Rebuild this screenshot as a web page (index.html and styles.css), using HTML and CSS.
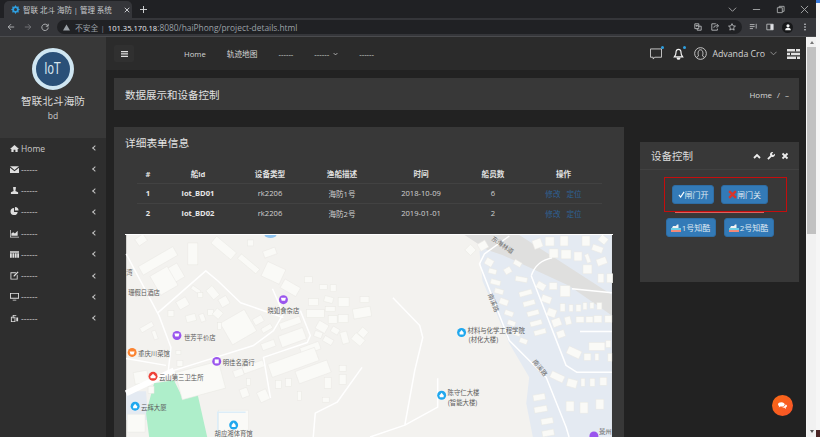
FILE: index.html
```html
<!DOCTYPE html>
<html lang="zh">
<head>
<meta charset="utf-8">
<title>智联 北斗 海防 | 管理 系统</title>
<link rel="stylesheet" href="styles.css">
</head>
<body>
<div class="window">
  <header class="browser">
    <div class="tabstrip">
      <div class="tab">
        <svg class="favicon" viewBox="0 0 12 12"><path class="fav" d="M6 0l1.6 2.2 2.8-.2-.4 2.6L12 6l-2 1.4.4 2.6-2.8-.2L6 12l-1.600-2.200-2.800.2L2 7.400 0 6l2-1.400L1.600 2l2.800.2z"/><circle class="favhole" cx="6" cy="6" r="2"/></svg>
        <span class="tabtitle">智联 北斗 海防 | 管理 系统</span>
        <svg class="tabx" viewBox="0 0 8 8"><path d="M1 1l6 6M7 1L1 7"/></svg>
      </div>
      <svg class="newtab" viewBox="0 0 9 9"><path d="M4.500 0v9M0 4.500h9"/></svg>
      <div class="winctl">
        <svg class="wi" viewBox="0 0 10 10"><path d="M1 3l4 4 4-4"/></svg>
        <svg class="wi" viewBox="0 0 10 10"><path d="M1 5h8"/></svg>
        <svg class="wi" viewBox="0 0 10 10"><path d="M1.500 3h5.500v5.500H1.500zM3.500 3V1.500H9V7H7"/></svg>
        <svg class="wi" viewBox="0 0 10 10"><path d="M1 1l8 8M9 1l-8 8"/></svg>
      </div>
    </div>
    <div class="toolbar">
      <div class="navbtns">
        <svg class="ti" viewBox="0 0 10 10"><path d="M9 5H1.500M5 1.500L1.500 5 5 8.500"/></svg>
        <svg class="ti dim" viewBox="0 0 10 10"><path d="M1 5h7.500M5 1.500L8.500 5 5 8.500"/></svg>
        <svg class="ti" viewBox="0 0 10 10"><path d="M8.500 3.500A4 4 0 1 0 9 5.500M9 1v3H6"/></svg>
      </div>
      <div class="omnibox">
        <svg class="warn" viewBox="0 0 8 8"><path d="M4 .5L8 7.500H0z"/></svg>
        <span class="insecure">不安全</span><span class="sep">|</span>
        <span class="url"><b>101.35.170.18</b>:8080/haiPhong/project-details.html</span>
        <span class="omniicons">
          <svg class="ti small" viewBox="0 0 10 10"><path d="M1 1h5v6H1zM5 4h4v5H4V7M2 3h3M3.500 3v2"/></svg>
          <svg class="ti small" viewBox="0 0 10 10"><path d="M7 1l2.500 2.500L7 6M9 3.500H6A2.500 2.500 0 0 0 3.500 6M6 1H1v8h7V7"/></svg>
          <svg class="ti small" viewBox="0 0 10 10"><path d="M5 .8l1.300 2.800 3 .3-2.300 2 .7 3L5 7.400 2.300 8.900l.7-3-2.300-2 3-.3z"/></svg>
        </span>
      </div>
      <div class="exts">
        <svg class="ti" viewBox="0 0 10 10"><path d="M1 2h6M1 4.500h6M1 7h4M9 1v6"/></svg>
        <svg class="ti" viewBox="0 0 10 10"><path d="M1 1.500h8v7H1z"/><path class="solid" d="M5.500 1.500H9v7H5.500z"/></svg>
        <span class="avatar"><svg viewBox="0 0 10 10"><circle class="solid" cx="5" cy="3.500" r="2"/><path class="solid" d="M1.500 9c0-2 1.500-3 3.500-3s3.500 1 3.500 3z"/></svg></span>
        <svg class="ti" viewBox="0 0 10 10"><circle class="solid" cx="5" cy="1.500" r="1"/><circle class="solid" cx="5" cy="5" r="1"/><circle class="solid" cx="5" cy="8.500" r="1"/></svg>
      </div>
    </div>
  </header>

  <div class="viewport">
    <div class="app">
      <aside class="sidebar">
        <div class="brand">
          <div class="logo"><span class="logotext">IoT</span></div>
          <div class="brandname">智联北斗海防</div>
          <div class="branduser">bd</div>
        </div>
        <nav class="menu">
          <a class="item"><svg class="mi" viewBox="0 0 10 10"><path d="M5 1L0 5.500h1.500V9h2.500V6.500h2V9h2.500V5.500H10z"/></svg><span>Home</span><i class="arrow"></i></a>
          <a class="item"><svg class="mi" viewBox="0 0 10 10"><path d="M0 1.500h10L5 5.500zM0 3v6h10V3L5 7z"/></svg><span>------</span><i class="arrow"></i></a>
          <a class="item"><svg class="mi" viewBox="0 0 10 10"><path d="M3.500 1h3v1.500L6 5.500l3 1.500v2H1V7l3-1.500-.5-3z"/></svg><span>------</span><i class="arrow"></i></a>
          <a class="item"><svg class="mi" viewBox="0 0 10 10"><path d="M4.500 1a4 4 0 1 0 4 4.500h-4zM5.500 0v4h4a4 4 0 0 0-4-4z"/></svg><span>------</span><i class="arrow"></i></a>
          <a class="item"><svg class="mi" viewBox="0 0 10 10"><path d="M0 1h.8v7.500H10V9.500H0zM1.500 7.500V5l2-1.500 2 1.500 3-3v5.500z"/></svg><span>------</span><i class="arrow"></i></a>
          <a class="item"><svg class="mi" viewBox="0 0 10 10"><path d="M0 1.500h10v1.500H0zM0 3.500h2v5H0zM2.700 3.500h2v5h-2zM5.400 3.500h2v5h-2zM8 3.500h2v5H8z"/></svg><span>------</span><i class="arrow"></i></a>
          <a class="item"><svg class="mi" viewBox="0 0 10 10"><path d="M1.500 1.500H7L6 2.500H1.500v6h6V5l1-1v5.500H.5v-8zM8.500 .5l1 1L5 6H4V5z"/></svg><span>------</span><i class="arrow"></i></a>
          <a class="item"><svg class="mi" viewBox="0 0 10 10"><path d="M0 1h10v6.500H0zM1 2v4.500h8V2zM3 8.500h4V9.500H3z"/></svg><span>------</span><i class="arrow"></i></a>
          <a class="item"><svg class="mi" viewBox="0 0 10 10"><path d="M3 1h4v1H4v3H3zM1 3h5v6H1zM2 4v4h3V4zM7 4h2v4H7z"/></svg><span>------</span><i class="arrow"></i></a>
        </nav>
      </aside>

      <div class="content">
        <div class="topbar">
          <button class="toggle"><svg viewBox="0 0 7 6"><path d="M0 0h7v1.300H0zM0 2.300h7v1.300H0zM0 4.700h7V6H0z"/></svg></button>
          <nav class="topnav">
            <a>Home</a><a>轨迹地图</a><a>------</a>
            <a class="dropdown">------<svg viewBox="0 0 8 5"><path d="M1 1l3 3 3-3"/></svg></a>
            <a>------</a>
          </nav>
          <div class="topright">
            <span class="notif"><svg class="ticon chaticon" viewBox="0 0 13 13"><path d="M.5 1h12v9H5l-1.500 2V10H.5z"/></svg><i class="dot"></i></span>
            <span class="notif bell"><svg class="ticon belli" viewBox="0 0 13 13"><path d="M6.500 1C4 1 3.500 3 3.500 5c0 2.500-1 3.500-2 5h10c-1-1.500-2-2.500-2-5 0-2-.5-4-3-4zM5 11.500a1.500 1.200 0 0 0 3 0z"/></svg><i class="dot"></i></span>
            <svg class="ticon user" viewBox="0 0 14 14"><circle cx="7" cy="7" r="6.300"/><path d="M5 9.500C4 8 4 3 7 3s3 5 2 6.500M3 11.500c.5-1.500 1.500-2 2-2M11 11.500c-.5-1.500-1.500-2-2-2"/></svg>
            <span class="username">Advanda Cro</span>
            <svg class="userchev" viewBox="0 0 8 5"><path d="M.5.500L4 4 7.500.500"/></svg>
            <svg class="stack" viewBox="0 0 13 10"><path d="M0 0h13v2.500H0zM0 3.700h13v2.600H0zM0 7.500h13V10H0z"/><path class="stackgap" d="M8 0h1v2.500H8zM3 3.700h1v2.600H3zM9 7.500h1V10H9z"/></svg>
          </div>
        </div>

        <div class="main">
          <div class="pagehead">
            <h1>数据展示和设备控制</h1>
            <div class="crumb"><span>Home</span><span>/</span><span>–</span></div>
          </div>
          <div class="columns">
            <section class="card">
              <h2>详细表单信息</h2>
              <table class="grid">
                <colgroup><col class="c1"><col class="c2"><col class="c3"><col class="c4"><col class="c5"><col class="c6"><col class="c7"></colgroup>
                <thead><tr><th>#</th><th>船id</th><th>设备类型</th><th>渔船描述</th><th>时间</th><th>船员数</th><th>操作</th></tr></thead>
                <tbody>
                  <tr><td class="strong">1</td><td class="strong">iot_BD01</td><td>rk2206</td><td>海防1号</td><td>2018-10-09</td><td>6</td><td class="ops"><a>修改</a><a>定位</a></td></tr>
                  <tr><td class="strong">2</td><td class="strong">iot_BD02</td><td>rk2206</td><td>海防2号</td><td>2019-01-01</td><td>2</td><td class="ops"><a>修改</a><a>定位</a></td></tr>
                </tbody>
              </table>
              <svg class="map" viewBox="0 0 488 210" width="488" height="210">
                <rect class="m-land" width="488" height="210"/>
                <path class="m-res" d="M385 0L355 16l3 30 27 63 20 34-3 26 8 41H488V0z"/>
                <path class="m-res" d="M0 157h20l2 29H0z"/>
                <path class="m-band" d="M340 0l23 15 15 5 67 31 43 30V60L395 0z"/>
                <path class="m-green" d="M28 149l20-3 9 18 15-3 11 49H24l-4-31z"/>
                <ellipse class="m-water" cx="145" cy="0" rx="6" ry="3"/>
                <g class="m-bld">
                  <rect x="10" y="1" width="10" height="8" transform="rotate(-35 15 5)"/>
                  <rect x="12" y="21" width="40" height="10" transform="rotate(-30 32 26)"/>
                  <rect x="40" y="31" width="16" height="16" transform="rotate(-30 48 39)"/>
                  <rect x="62" y="8" width="10" height="22"/>
                  <rect x="85" y="8.500" width="26" height="9" transform="rotate(40 98 13)"/>
                  <rect x="122" y="5" width="6" height="6"/>
                  <rect x="138" y="14" width="13" height="7" transform="rotate(-20 145 18)"/>
                  <rect x="138" y="30" width="20" height="16" transform="rotate(25 148 38)"/>
                  <rect x="111" y="26" width="24" height="6" transform="rotate(40 123 29)"/>
                  <rect x="179" y="42" width="8" height="6"/>
                  <rect x="156" y="48" width="18" height="10" transform="rotate(30 165 53)"/>
                  <rect x="194" y="50" width="8" height="5"/>
                  <rect x="205" y="50" width="6" height="7"/>
                  <rect x="183" y="64" width="10" height="7"/>
                  <rect x="199" y="62" width="9" height="6" transform="rotate(15 204 65)"/>
                  <rect x="213" y="63" width="11" height="9"/>
                  <rect x="235" y="62" width="9" height="6"/>
                  <rect x="181" y="75" width="18" height="8"/>
                  <rect x="200" y="72" width="10" height="5"/>
                  <rect x="228" y="73" width="18" height="10" transform="rotate(-10 237 78)"/>
                  <rect x="203" y="81" width="9" height="8"/>
                  <rect x="213" y="80" width="10" height="8"/>
                  <rect x="191" y="88" width="11" height="9" transform="rotate(30 197 93)"/>
                  <rect x="206" y="93" width="8" height="6" transform="rotate(30 210 96)"/>
                  <rect x="189" y="97" width="8" height="6" transform="rotate(20 193 100)"/>
                  <rect x="198" y="103" width="10" height="6" transform="rotate(30 203 106)"/>
                  <rect x="216" y="97" width="7" height="12" transform="rotate(-15 220 103)"/>
                  <rect x="227" y="101" width="12" height="8" transform="rotate(40 233 105)"/>
                  <rect x="234" y="94" width="8" height="8" transform="rotate(40 238 98)"/>
                  <rect x="28" y="35" width="20" height="22" transform="rotate(-30 38 46)"/>
                  <rect x="51" y="64" width="11" height="9" transform="rotate(-30 57 68)"/>
                  <rect x="42" y="76" width="6" height="6"/>
                  <rect x="60" y="80" width="10" height="7" transform="rotate(-15 65 83)"/>
                  <rect x="74" y="79" width="5" height="8" transform="rotate(-20 77 83)"/>
                  <rect x="14" y="90" width="14" height="5" transform="rotate(-30 21 93)"/>
                  <rect x="27" y="96" width="4" height="9" transform="rotate(-20 29 101)"/>
                  <rect x="82" y="75" width="6" height="6"/>
                  <rect x="88" y="75" width="8" height="8" transform="rotate(40 92 79)"/>
                  <rect x="94" y="62" width="9" height="9" transform="rotate(-30 99 67)"/>
                  <rect x="81" y="54" width="12" height="8" transform="rotate(50 87 58)"/>
                  <rect x="65" y="53" width="10" height="4" transform="rotate(35 70 55)"/>
                  <rect x="72" y="58" width="5" height="5"/>
                  <rect x="99" y="80" width="28" height="25" transform="rotate(-30 113 93)"/>
                  <rect x="92" y="88" width="4" height="7"/>
                  <rect x="136" y="91" width="11" height="5" transform="rotate(-30 142 94)"/>
                  <rect x="128" y="82" width="10" height="7" transform="rotate(-30 133 86)"/>
                  <rect x="154" y="85" width="22" height="7" transform="rotate(-20 165 89)"/>
                  <rect x="154" y="97" width="26" height="12" transform="rotate(-20 167 103)"/>
                  <rect x="136" y="107" width="14" height="7" transform="rotate(-20 143 111)"/>
                  <rect x="175" y="110" width="20" height="8" transform="rotate(-20 185 114)"/>
                  <rect x="143" y="121" width="50" height="14" transform="rotate(-20 168 128)"/>
                  <rect x="171" y="131" width="34" height="13" transform="rotate(-20 188 138)"/>
                  <rect x="117" y="129" width="22" height="7" transform="rotate(-20 128 133)"/>
                  <rect x="108" y="135" width="10" height="7" transform="rotate(-20 113 139)"/>
                  <rect x="121" y="144" width="4" height="7"/>
                  <rect x="115" y="154" width="8" height="9" transform="rotate(-20 119 159)"/>
                  <rect x="133" y="156" width="10" height="11" transform="rotate(-25 138 162)"/>
                  <rect x="150" y="146" width="6" height="8"/>
                  <rect x="160" y="144" width="6" height="8"/>
                  <rect x="172" y="157" width="4" height="9"/>
                  <rect x="199" y="143" width="7" height="11"/>
                  <rect x="214" y="131" width="7" height="6"/>
                  <rect x="214" y="140" width="7" height="10"/>
                  <rect x="197" y="163" width="7" height="5"/>
                  <rect x="50" y="116" width="5" height="4"/>
                  <rect x="51" y="126" width="6" height="6"/>
                  <rect x="52" y="132" width="45" height="28" transform="rotate(-15 75 146)"/>
                  <rect x="8" y="137" width="14" height="12" transform="rotate(-10 15 143)"/>
                  <rect x="22" y="152" width="6" height="7"/>
                  <rect x="93" y="176" width="30" height="28"/>
                  <rect x="1" y="180" width="18" height="18"/>
                  <rect x="342" y="11" width="8" height="8" transform="rotate(45 346 15)"/>
                  <rect x="354" y="7" width="9" height="8" transform="rotate(-30 358 11)"/>
                  <rect x="361" y="24" width="8" height="7" transform="rotate(30 365 27)"/>
                  <rect x="364" y="34" width="8" height="5" transform="rotate(15 368 37)"/>
                  <rect x="366" y="45" width="10" height="5" transform="rotate(15 371 48)"/>
                  <rect x="370" y="54" width="9" height="5" transform="rotate(15 374 57)"/>
                  <rect x="375" y="64" width="9" height="6" transform="rotate(20 379 67)"/>
                  <rect x="380" y="76" width="9" height="5" transform="rotate(20 384 79)"/>
                  <rect x="383" y="86" width="8" height="5" transform="rotate(20 387 89)"/>
                  <rect x="388" y="97" width="8" height="4" transform="rotate(20 392 99)"/>
                  <rect x="395" y="104" width="8" height="5" transform="rotate(20 399 107)"/>
                  <rect x="380" y="33" width="7" height="6" transform="rotate(-30 383 36)"/>
                  <rect x="389" y="26" width="8" height="5" transform="rotate(30 393 29)"/>
                  <rect x="391" y="42" width="12" height="5" transform="rotate(10 397 45)"/>
                  <rect x="395" y="56" width="13" height="5" transform="rotate(-15 401 59)"/>
                  <rect x="399" y="66" width="12" height="5" transform="rotate(-15 405 69)"/>
                  <rect x="403" y="76" width="12" height="5" transform="rotate(-15 409 79)"/>
                  <rect x="406" y="86" width="12" height="5" transform="rotate(-15 412 89)"/>
                  <rect x="410" y="95" width="12" height="5" transform="rotate(-15 416 98)"/>
                  <rect x="409" y="4" width="9" height="9" transform="rotate(-20 414 9)"/>
                  <rect x="421" y="2" width="9" height="9"/>
                  <rect x="436" y="1" width="8" height="10"/>
                  <rect x="425" y="14" width="9" height="9"/>
                  <rect x="437" y="15" width="10" height="9"/>
                  <rect x="450" y="17" width="8" height="9"/>
                  <rect x="458" y="1" width="8" height="10"/>
                  <rect x="468" y="11" width="11" height="6" transform="rotate(20 474 14)"/>
                  <rect x="475" y="1" width="8" height="7" transform="rotate(40 479 5)"/>
                  <rect x="462" y="19" width="4" height="9" transform="rotate(-20 464 24)"/>
                  <rect x="473" y="23" width="10" height="7" transform="rotate(-20 478 27)"/>
                  <rect x="459" y="30" width="9" height="9"/>
                  <rect x="474" y="39" width="6" height="9"/>
                  <rect x="483" y="39" width="6" height="9"/>
                  <rect x="412" y="48" width="9" height="7" transform="rotate(30 417 52)"/>
                  <rect x="425" y="48" width="8" height="7"/>
                  <rect x="436" y="51" width="10" height="11"/>
                  <rect x="417" y="61" width="10" height="7" transform="rotate(20 422 65)"/>
                  <rect x="423" y="74" width="9" height="8" transform="rotate(20 427 78)"/>
                  <rect x="436" y="69" width="5" height="8"/>
                  <rect x="445" y="70" width="4" height="7"/>
                  <rect x="452" y="70" width="5" height="7"/>
                  <rect x="459" y="68" width="4" height="7"/>
                  <rect x="466" y="68" width="4" height="6"/>
                  <rect x="473" y="68" width="5" height="7"/>
                  <rect x="428" y="84" width="9" height="8" transform="rotate(-20 432 88)"/>
                  <rect x="441" y="82" width="6" height="8" transform="rotate(-15 444 86)"/>
                  <rect x="452" y="82" width="8" height="6"/>
                  <rect x="462" y="82" width="7" height="6"/>
                  <rect x="470" y="81" width="8" height="7"/>
                  <rect x="481" y="81" width="7" height="7"/>
                  <rect x="433" y="96" width="8" height="7" transform="rotate(-20 437 100)"/>
                  <rect x="465" y="108" width="16" height="8"/>
                  <rect x="482" y="106" width="5" height="7"/>
                  <rect x="443" y="114" width="14" height="8" transform="rotate(25 450 118)"/>
                  <rect x="460" y="119" width="7" height="7"/>
                  <rect x="471" y="119" width="4" height="7"/>
                  <rect x="484" y="119" width="4" height="8"/>
                  <rect x="426" y="139" width="14" height="7" transform="rotate(25 433 143)"/>
                  <rect x="443" y="145" width="10" height="8" transform="rotate(15 448 149)"/>
                  <rect x="457" y="144" width="4" height="8"/>
                  <rect x="466" y="144" width="5" height="8"/>
                  <rect x="476" y="143" width="7" height="8"/>
                  <rect x="409" y="160" width="12" height="6" transform="rotate(-10 415 163)"/>
                  <rect x="410" y="172" width="13" height="6" transform="rotate(-10 417 175)"/>
                  <rect x="417" y="184" width="12" height="6" transform="rotate(-10 423 187)"/>
                  <rect x="418" y="196" width="12" height="6" transform="rotate(-10 424 199)"/>
                  <rect x="442" y="167" width="8" height="10"/>
                  <rect x="456" y="168" width="8" height="11"/>
                  <rect x="472" y="165" width="8" height="10"/>
                </g>
                <path class="m-pool" d="M92 204V178h28"/>
                <g class="m-road">
                  <path d="M385 1l-25 18-5 10 30 77 17 17 20 20 20 50 3 10"/>
                  <path d="M407 41l35 90 11 7h35M407 41q5-15 21-18"/>
                  <path d="M456 97h32M448 54l40 4"/>
                  <path d="M268 63l27 28 3 12-8 33-10 55M313 144v29l-33 18-35 12"/>
                  <path d="M0 19l33 62 12 32-3 26"/>
                  <path d="M32 78l48-42 12 10 23 22 43 15"/>
                  <path d="M48 136l80-25 20-15 10-17-11-25"/>
                  <path d="M145 164l-7-41 44-15 3-7-10-25"/>
                  <path d="M237 133l-25 35-22 11-2 24"/>
                  <path d="M0 124l40 7"/>
                </g>
                <path class="m-mainroad" d="M0 159l48-23"/>
                <g class="m-labels">
                  <circle class="pin-violet" cx="158" cy="65" r="4.500"/><path class="pin-mark" d="M155.500 63h5l-.8 3h-3.400z"/>
                  <text class="mid" x="158" y="78">晓如食杂店</text>
                  <circle class="pin-violet" cx="51" cy="101" r="4.500"/><path class="pin-mark" d="M48.500 99h5l-.8 3h-3.400z"/>
                  <text x="58" y="105">世芳平价店</text>
                  <circle class="pin-orange" cx="6" cy="118" r="4.500"/><path class="pin-mark" d="M3.500 117h5l-1 3h-3z"/>
                  <text x="12" y="122">重庆川菜馆</text>
                  <circle class="pin-violet" cx="91" cy="127" r="4.500"/><path class="pin-mark" d="M89 125h4v4h-4z"/>
                  <text x="97" y="131">明佳名酒行</text>
                  <circle class="pin-red" cx="27" cy="142" r="4.500"/><path class="pin-mark" d="M27 139.500l2.500 2.500v2h-5v-2z"/>
                  <text x="33" y="146">云山第三卫生所</text>
                  <circle class="pin-blue" cx="9" cy="172" r="4.500"/><path class="pin-mark" d="M9 169.500l2 2.500v2H7v-2z"/>
                  <text x="15" y="176">云辉大厦</text>
                  <circle class="pin-blue" cx="108" cy="191" r="4.500"/><path class="pin-mark" d="M108 188.500l2 2.500v2h-4v-2z"/>
                  <text class="mid" x="108" y="201.500">胡应湘体育馆</text>
                  <text x="2" y="60">珊假日酒店</text>
                  <text x="0" y="40">湾</text>
                  <circle class="pin-blue" cx="337" cy="98" r="4.500"/><path class="pin-mark" d="M337 95.500l2 2.500v2h-4v-2z"/>
                  <text x="343" y="98">材料与化学工程学院</text>
                  <text class="mid" x="359" y="108">(材化大楼)</text>
                  <circle class="pin-blue" cx="317" cy="161" r="4.500"/><path class="pin-mark" d="M317 158.500l2 2.500v2h-4v-2z"/>
                  <text x="323" y="161">陈守仁大楼</text>
                  <text class="mid" x="338" y="171">(智能大楼)</text>
                  <text class="mid road-label" x="0" y="0" transform="translate(377 12) rotate(35)">东海林道</text>
                  <text class="mid road-label" x="0" y="0" transform="translate(367 69) rotate(68)">南溪路</text>
                  <text class="mid road-label" x="0" y="0" transform="translate(414 135) rotate(52)">南溪路</text>
                  <circle class="pin-violet" cx="470" cy="202" r="4.500"/>
                  <text x="475" y="200">景州</text>
                </g>
              </svg>
            </section>

            <aside class="panel">
              <div class="panelhead">
                <h3>设备控制</h3>
                <div class="tools">
                  <svg viewBox="0 0 8 6"><path class="stroke" d="M1 5l3-3 3 3"/></svg>
                  <svg viewBox="0 0 8 8"><path d="M7.800 1.800L6 3.200 4.800 2 6.200.2A2.300 2.300 0 0 0 3.300 3.400L.3 6.500l1.200 1.200 3.100-3a2.300 2.300 0 0 0 3.200-2.900z"/></svg>
                  <svg viewBox="0 0 8 8"><path class="stroke" d="M1.500 1.500l5 5M6.500 1.500l-5 5"/></svg>
                </div>
              </div>
              <div class="panelbody">
                <div class="gatebox">
                  <button class="btn"><svg class="bi" viewBox="0 0 8 8"><path class="check" d="M1 4.500l2 2.500 4-6"/></svg>闸门开</button>
                  <button class="btn"><svg class="bi crossi" viewBox="0 0 8 8"><path class="cross" d="M1 1l6 6M7 1L1 7"/></svg>闸门关</button>
                </div>
                <div class="gateunder"></div>
                <div class="alarms">
                  <button class="btn"><svg class="bi boat" viewBox="0 0 10 8"><path class="boat-top" d="M1 4l1-2h3l1-1.500h1.500V4z"/><path class="boat-sea" d="M0 4h10v2H0z"/><path class="boat-low" d="M0 6h10v2H0z"/></svg>1号知酷</button>
                  <button class="btn"><svg class="bi boat" viewBox="0 0 10 8"><path class="boat-top" d="M1 4l1-2h3l1-1.500h1.500V4z"/><path class="boat-sea" d="M0 4h10v2H0z"/><path class="boat-low" d="M0 6h10v2H0z"/></svg>2号知酷</button>
                </div>
              </div>
            </aside>
          </div>
        </div>
      </div>
      <button class="chat"><svg viewBox="0 0 12 9"><path d="M4.500 0C2 0 0 1.200 0 3c0 1 .6 1.800 1.500 2.300L1 7l2-1.200h1.500C7 5.800 9 4.600 9 3S7 0 4.500 0z"/><path d="M10 3c0 1.800-2 3.300-4.500 3.500C6.300 7.200 7.200 7.500 8.500 7.500L10.500 9l-.3-2C11.300 6.500 12 5.800 12 5c0-.9-.8-1.600-2-2z"/></svg></button>
    </div>
    <div class="scrollbar">
      <i class="sb-up"></i>
      <div class="sb-thumb"></div>
      <i class="sb-down"></i>
    </div>
  </div>
</div>
<div class="desktop">
  <div class="desk-top"></div>
  <div class="desk-low"></div>
</div>
</body>
</html>
```
FILE: styles.css
```css
* { box-sizing: border-box; }
html, body { margin: 0; padding: 0; height: 100%; }
body {
  display: flex;
  width: 820px;
  height: 437px;
  overflow: hidden;
  font-family: "Open Sans", "Noto Sans CJK SC", sans-serif;
  color: #e6e6e6;
  background: #f6f6f6;
}
svg { display: block; flex: none; }
h1, h2, h3 { margin: 0; font-weight: 400; }
button { font: inherit; border: 0; padding: 0; }

/* browser chrome */
.window { width: 816px; height: 437px; display: flex; flex-direction: column; }
.browser { flex: none; height: 37px; background: #202124; }
.tabstrip { height: 18px; display: flex; align-items: flex-end; padding-left: 4px; }
.tab {
  width: 128px; height: 17px; background: #35363a;
  border-radius: 5px 5px 0 0;
  display: flex; align-items: center; padding-left: 7px;
}
.favicon { width: 9px; height: 9px; }
.fav { fill: #2e9fe0; }
.favhole { fill: #35363a; }
.tabtitle { margin-left: 3px; font-size: 7.500px; color: #c8cacd; white-space: nowrap; width: 101px; overflow: hidden; }
.tabx { width: 6px; height: 6px; }
.tabx path, .newtab path, .wi path { fill: none; stroke: #d6d8da; stroke-width: 1.200; }
.newtab { width: 7px; height: 7px; margin: 0 0 5px 8px; }
.winctl { margin-left: auto; display: flex; gap: 15px; padding-right: 7px; height: 18px; align-items: center; }
.wi { width: 9px; height: 9px; }
.wi path { stroke: #a9abad; stroke-width: 1; }

.toolbar {
  height: 19px; background: #35363a; border-bottom: 1px solid #4a4b4e;
  display: flex; align-items: center;
}
.navbtns { width: 57px; display: flex; gap: 9px; padding-left: 7px; }
.ti { width: 8px; height: 8px; }
.ti path, .omniicons path { fill: none; stroke: #c7c9cc; stroke-width: 1; }
.ti.dim path { stroke: #7d7f83; }
.ti .solid { fill: #dfe1e5; stroke: none; }
.ti circle.solid { fill: #dfe1e5; }
.omnibox {
  width: 685px; height: 14px; border-radius: 7px; background: #202124;
  display: flex; align-items: center; padding-left: 6px; font-size: 7.700px;
  white-space: nowrap;
}
.warn { width: 7px; height: 7px; }
.warn path { fill: #9aa0a6; }
.insecure { margin-left: 5px; color: #9aa0a6; font-size: 7.800px; }
.sep { margin: 0 3px 0 2px; color: #80858a; font-size: 8px; }
.url { color: #9aa0a6; font-size: 8.400px; }
.url b { color: #e8eaed; font-weight: 500; font-size: 7.600px; }
.omniicons { margin-left: auto; display: flex; gap: 9px; padding-right: 6px; }
.small { width: 8px; height: 8px; }
.exts { flex: 1; display: flex; align-items: center; gap: 9px; padding-left: 7px; }
.avatar { width: 11px; height: 11px; border-radius: 50%; background: #17181a; display: flex; align-items: center; justify-content: center; margin-left: -1px; margin-right: -1px; }
.avatar svg { width: 8px; height: 8px; }
.avatar .solid { fill: #f1f3f4; }

/* viewport */
.viewport { flex: 1; min-height: 0; display: flex; }
.app { width: 806px; height: 400px; display: flex; position: relative; background: #222; overflow: hidden; }
.scrollbar {
  margin-left: 1px; width: 9px; background: #f1f1f1;
  display: flex; flex-direction: column;
}
.sb-up { height: 10px; flex: none; }
.sb-up::after {
  content: ""; display: block; margin: 4px auto 0; width: 0; height: 0;
  border-left: 2.500px solid transparent; border-right: 2.500px solid transparent; border-bottom: 3px solid #777;
}
.sb-thumb { height: 187px; background: #c1c1c1; flex: none; }
.sb-down { margin-top: auto; height: 9px; flex: none; }
.sb-down::after {
  content: ""; display: block; margin: 2px auto 0; width: 0; height: 0;
  border-left: 2.500px solid transparent; border-right: 2.500px solid transparent; border-top: 3px solid #555;
}
.desktop { width: 4px; display: flex; flex-direction: column; background: #f6f6f6; }
.desk-top { height: 3px; background: #3f7fe0; }
.desk-low { margin-top: auto; height: 7px; background: #4a2626; }

/* sidebar */
.sidebar { width: 106px; flex: none; background: #2e2e2e; display: flex; flex-direction: column; }
.brand {
  height: 100.500px; background: #383838; padding-top: 11px;
  display: flex; flex-direction: column; align-items: center;
}
.logo {
  width: 42px; height: 42px; border-radius: 50%;
  background: #2a5078; border: 4.500px solid #cfe6f2;
  display: flex; align-items: center; justify-content: center;
}
.logotext { font-family: "Liberation Sans", sans-serif; font-size: 16px; color: #d8e6ee; transform: scaleX(.72); }
.brandname { margin-top: 4px; font-size: 10.700px; line-height: 15px; color: #dcdcdc; }
.branduser { font-size: 8.500px; line-height: 12px; margin-top: 1px; color: #cfcfcf; }
.menu { display: flex; flex-direction: column; }
.item {
  height: 21.250px; display: flex; align-items: center; padding-left: 10px;
  font-size: 8.500px; color: #c9c9c9;
}
.mi { width: 9px; height: 9px; margin-right: 2px; }
.mi path { fill: #dedede; }
.arrow {
  margin-left: auto; margin-right: 9px; width: 4px; height: 4px;
  border-left: 1.300px solid #c4c4c4; border-bottom: 1.300px solid #c4c4c4;
  transform: rotate(45deg);
}

/* topbar */
.content { flex: 1; min-width: 0; display: flex; flex-direction: column; }
.topbar {
  height: 33px; flex: none; background: #2b2b2b;
  display: flex; align-items: center; padding-left: 8px;
}
.toggle {
  width: 20px; height: 17px; background: #303030; border-radius: 2px;
  display: flex; align-items: center; justify-content: center;
}
.toggle svg { width: 7px; height: 6px; }
.toggle path { fill: #e0e0e0; }
.topnav { display: flex; margin-left: 50px; font-size: 7.700px; color: #d6d6d6; gap: 21px; align-items: center; }
.dropdown { display: flex; align-items: center; gap: 4px; }
.dropdown svg { width: 5px; height: 4px; }
.dropdown path { fill: none; stroke: #d6d6d6; stroke-width: 1.200; }
.topright { margin-left: auto; display: flex; align-items: center; padding-right: 6px; }
.notif { position: relative; display: block; margin-right: 11px; }
.notif.bell { margin-right: 10px; }
.ticon { width: 13px; height: 13px; }
.chaticon { width: 12px; height: 12px; }
.belli { width: 11px; height: 12px; }
.ticon path, .ticon circle { fill: none; stroke: #cfcfcf; stroke-width: 1; }
.bell .ticon path { stroke: #f4f4f4; stroke-width: 1.400; }
.dot { position: absolute; top: -2px; right: -2px; width: 3px; height: 3px; border-radius: 50%; background: #2e9fe0; }
.user { width: 13px; height: 13px; }
.username { margin-left: 5px; font-size: 8.800px; color: #d4d4d4; white-space: nowrap; }
.userchev { width: 7px; height: 5px; margin: 0 10px 0 5px; }
.userchev path { fill: none; stroke: #9a9a9a; stroke-width: 1; }
.stack { width: 13px; height: 10px; }
.stack path { fill: #e2e2e2; }
.stack .stackgap { fill: #2b2b2b; }

/* main */
.main { flex: 1; min-height: 0; padding: 8px 7px 0 8px; }
.pagehead {
  height: 32px; background: #383838; display: flex; align-items: center;
  justify-content: space-between; padding: 0 10px 0 11px;
}
.pagehead h1 { font-size: 10.500px; color: #e0e0e0; }
.crumb { display: flex; gap: 5px; font-size: 8px; color: #d8d8d8; }
.columns { display: flex; align-items: flex-start; gap: 16px; margin-top: 17px; }
.card { width: 510px; height: 320px; flex: none; background: #383838; padding: 9px 11px 0; overflow: hidden; }
.card h2 { font-size: 10.700px; line-height: 14px; color: #e2e2e2; }
table.grid {
  margin: 14px 0 0 12px; width: 465px; table-layout: fixed; border-collapse: collapse;
  font-size: 7.600px; color: #d2d2d2; text-align: center;
}
.c1 { width: 22px; } .c2 { width: 78px; } .c3 { width: 66px; } .c4 { width: 78px; }
.c5 { width: 80px; } .c6 { width: 64px; } .c7 { width: 77px; }
table.grid th, table.grid td { padding: 0; height: 19.500px; font-weight: 400; border-top: 1px solid #424242; }
table.grid th { font-weight: 700; color: #e2e2e2; border-top: 0; }
table.grid td.strong { font-weight: 700; color: #e8e8e8; }
.ops a { color: #2f6296; margin: 0 3px; }
.map { margin-top: 11px; border-top: 1px solid #fff; }
.m-land { fill: #f3f2ef; }
.m-res { fill: #e4eaf2; }
.m-band { fill: #dfdfde; }
.m-green { fill: #aeeeca; }
.m-water { fill: #8fc4f0; }
.m-bld rect { fill: #fafaf7; stroke: #e9e8e3; stroke-width: .5; }
.m-pool { fill: none; stroke: #dcedf8; stroke-width: 1.500; }
.m-road path { fill: none; stroke: #fff; stroke-width: 1.500; stroke-linejoin: round; }
.m-mainroad { fill: none; stroke: #fff; stroke-width: 6; }
.m-labels text { font-size: 6.400px; fill: #5b5b5b; }
.m-labels text.mid { text-anchor: middle; }
.m-labels text.road-label { fill: #6f6f6f; }
.pin-violet { fill: #9a55ee; }
.pin-orange { fill: #fb8330; }
.pin-red { fill: #ee4138; }
.pin-blue { fill: #20a8ee; }
.pin-mark { fill: #fff; }

/* panel */
.panel { width: 159px; height: 140px; flex: none; margin-top: 15px; background: #383838; }
.panelhead {
  height: 28px; display: flex; align-items: center; justify-content: space-between;
  padding: 0 10px 0 11px; border-bottom: 1px solid #414141;
}
.panelhead h3 { font-size: 10.500px; color: #dcdcdc; }
.tools { display: flex; align-items: center; gap: 6px; }
.tools svg { width: 8px; height: 8px; }
.tools path { fill: #eee; }
.tools .stroke { fill: none; stroke: #eee; stroke-width: 1.800; }
.panelbody { padding-top: 7px; }
.gatebox {
  margin-left: 24px; width: 123px; height: 35px; border: 1px solid #c40d0d;
  display: flex; align-items: center; padding: 0 0 0 7px; gap: 7px;
}
.gateunder { margin: 0 0 0 35px; width: 89px; height: 1px; background: #d9635f; }
.btn {
  height: 19px; padding: 0; background: #337ab7; color: #dfe9f2; border-radius: 3px;
  font-size: 8px; display: inline-flex; align-items: center; justify-content: center;
  white-space: nowrap; border: 1px solid #2e6da4;
}
.gatebox .btn:first-child { width: 42px; }
.gatebox .btn:last-child { width: 47px; }
.bi { width: 7px; height: 7px; }
.crossi { width: 9px; height: 9px; }
.check { fill: none; stroke: #fff; stroke-width: 1.300; }
.cross { fill: none; stroke: #d9352b; stroke-width: 2; }
.alarms { display: flex; gap: 8px; margin: 5px 0 0 25.500px; }
.alarms .btn { width: 50px; height: 19px; }
.boat { width: 10px; height: 8px; margin-right: 1px; }
.boat-top { fill: #f2f2f2; }
.boat-sea { fill: #6fd0e6; }
.boat-low { fill: #f08a7a; }

/* floating chat */
.chat {
  position: absolute; left: 772px; top: 358px; width: 21px; height: 21px; border-radius: 50%;
  background: linear-gradient(135deg, #f96a14, #f8532a);
  display: flex; align-items: center; justify-content: center;
}
.chat svg { width: 9px; height: 7px; }
.chat path { fill: #fff; }
```
